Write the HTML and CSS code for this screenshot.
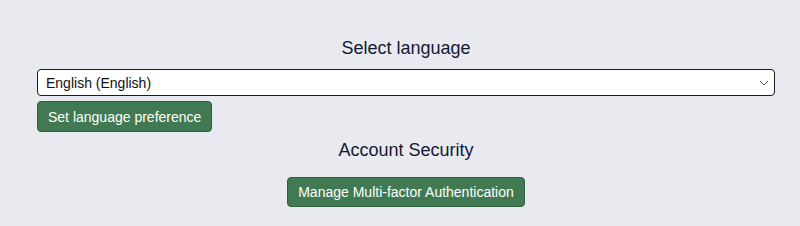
FILE: index.html
```html
<!DOCTYPE html>
<html lang="en">

<head>
    <meta charset="UTF-8">
    <meta name="viewport" content="width=device-width, initial-scale=1.0">
    <title>Account settings</title>
    <link rel="stylesheet" href="styles.css">
</head>

<body>

    <div class="settings">

        <div class="section">
            <h2>Select language</h2>
            <div class="lang">
                <select class="picker">
                    <option>English (English)</option>
                </select>
                <button class="btn">Set language preference</button>
            </div>
        </div>

        <div class="section">
            <h2 class="sec-title">Account Security</h2>
            <button class="btn mfa">Manage Multi-factor Authentication</button>
        </div>

    </div>

</body>

</html>
```

FILE: styles.css
```css
* {
    box-sizing: border-box;
    font-family: "Liberation Sans", Arial, sans-serif;
}

html,
body {
    margin: 0;
    background-color: #e9eaef;
}

.settings {
    padding: 37px 25px 0 37px;
}

.section {
    display: flex;
    flex-direction: column;
    align-items: center;
}

.section h2 {
    margin: 0;
    font-size: 18px;
    line-height: 22px;
    font-weight: normal;
    color: #141a33;
}

.sec-title {
    margin-top: 7px !important;
}

.lang {
    width: 100%;
    display: flex;
    flex-direction: column;
    align-items: flex-start;
    gap: 5px;
    margin-top: 10px;
}

.picker {
    appearance: none;
    -webkit-appearance: none;
    width: 100%;
    height: 27px;
    padding: 0 8px;
    font-size: 14px;
    color: #111;
    background-color: #fff;
    /* small thin chevron like the native one */
    background-image: url("data:image/svg+xml;utf8,<svg xmlns='http://www.w3.org/2000/svg' width='10' height='6' viewBox='0 0 10 6'><path d='M1 1l4 4 4-4' fill='none' stroke='%23555' stroke-width='1'/></svg>");
    background-repeat: no-repeat;
    background-position: right 5px center;
    border: 1.5px solid #1b1b1b;
    border-radius: 4px;
}

.btn {
    height: 31px;
    padding: 0 10px;
    font-size: 14px;
    color: #fff;
    background-color: #417a52;
    border: 1px solid #2f5f3d;
    border-radius: 4px;
    cursor: pointer;
}

.mfa {
    margin-top: 16px;
    height: 30px;
}
```
